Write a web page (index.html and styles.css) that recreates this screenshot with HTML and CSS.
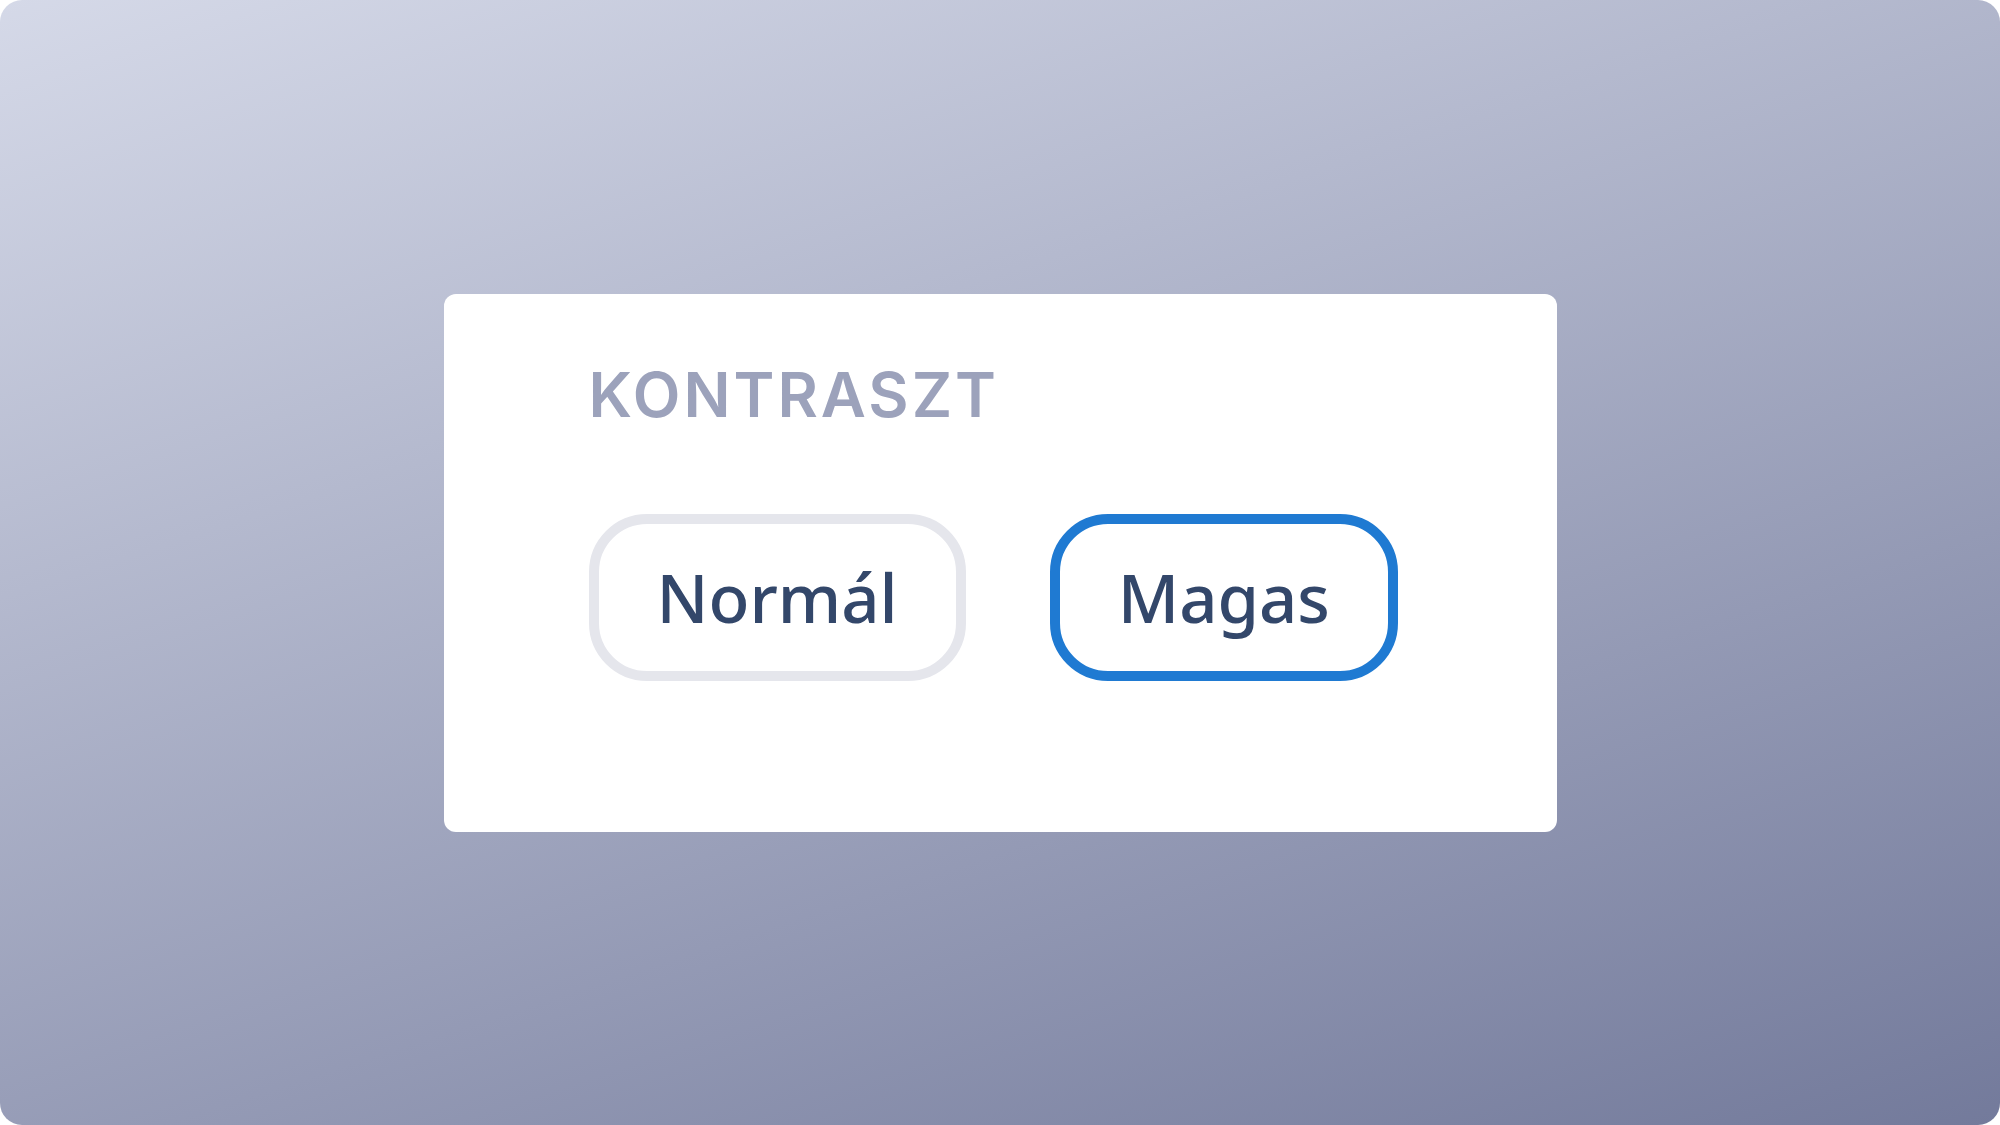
FILE: index.html
```html
<!DOCTYPE html>
<html lang="hu">
<head>
    <meta charset="UTF-8">
    <title>Kontraszt</title>
    <link rel="stylesheet" href="styles.css">
</head>
<body>
    <div class="screen">
        <div class="panel">
            <h2 class="panel-title">KONTRASZT</h2>
            <div class="options">
                <button class="option">Normál</button>
                <button class="option selected">Magas</button>
            </div>
        </div>
    </div>
</body>
</html>
```

FILE: styles.css
```css
*{
    margin: 0;
    padding: 0;
    box-sizing: border-box;
}
html, body{
    width: 100%;
    height: 100%;
    background: #fff;
}
.screen{
    width: 2000px;
    height: 1125px;
    border-radius: 22px;
    background: linear-gradient(162deg, #d5d9e8 0%, #737a9b 100%);
    display: flex;
    align-items: center;
    justify-content: center;
}
.panel{
    width: 1113px;
    height: 538px;
    background: #fff;
    border-radius: 12px;
    padding: 70px 145px;
}
.panel-title{
    font-family: Inter, "Liberation Sans", sans-serif;
    font-weight: 600;
    font-size: 62px;
    line-height: 1;
    letter-spacing: 3px;
    color: #9ca2bb;
}
.options{
    display: flex;
    gap: 84px;
    margin-top: 88px;
}
.option{
    font-family: "Noto Sans", "Open Sans", sans-serif;
    font-size: 67px;
    font-weight: 500;
    line-height: 1;
    color: #33476a;
    background: #fff;
    border: 10px solid #e5e6ec;
    border-radius: 58px;
    padding: 40px 58px;
    cursor: pointer;
}
.option.selected{
    border-color: #1f7ad2;
}
```
